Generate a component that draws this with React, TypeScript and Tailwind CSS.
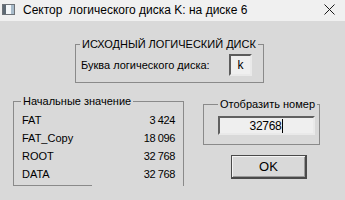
import React from "react";

function GroupLabel({ children, className }: { children: React.ReactNode; className: string }) {
  return (
    <span className={"absolute top-[-8px] bg-[#d9d9d9] px-[2px] text-[11px] leading-[14px] whitespace-nowrap " + className}>
      {children}
    </span>
  );
}

export default function App() {
  const rows: [string, string][] = [
    ["FAT", "3 424"],
    ["FAT_Copy", "18 096"],
    ["ROOT", "32 768"],
    ["DATA", "32 768"],
  ];
  return (
    <div className="w-[345px] h-[200px] bg-[#d9d9d9] flex flex-col overflow-hidden text-black font-['Liberation_Sans',Arial,sans-serif]">
      {/* Title bar */}
      <div className="h-[21px] bg-[#f0f0f0] flex items-center shrink-0">
        <svg width="13" height="11" viewBox="0 0 13 11" className="ml-[2px] mt-[-2px]">
          <rect x="0.5" y="0.5" width="12" height="10" fill="#e8eef2" stroke="#6e7378" />
          <rect x="1" y="1" width="3" height="9" fill="#5e6a74" />
          <rect x="4" y="1" width="5" height="9" fill="#f4f7f9" />
          <rect x="9" y="1" width="3" height="9" fill="#a9bccb" />
        </svg>
        <span className="ml-[8px] text-[12px] leading-[14px] mt-[-1px] whitespace-pre">Сектор  логического диска K: на диске 6</span>
        <svg width="11" height="11" viewBox="0 0 11 11" className="ml-auto mr-[10px] mt-[-2px]">
          <path d="M0.5 0.5 L10.5 10.5 M10.5 0.5 L0.5 10.5" stroke="#1a1a1a" strokeWidth="1" />
        </svg>
      </div>

      {/* Group 1 */}
      <div className="relative mt-[23px] ml-[75px] w-[189px] h-[39px] border border-[#8a8a8a] flex items-center pl-[5px] pr-[11px] pt-[2px]">
        <GroupLabel className="left-[4px]">ИСХОДНЫЙ ЛОГИЧЕСКИЙ ДИСК</GroupLabel>
        <span className="text-[11px] leading-[14px] whitespace-nowrap">Буква логического диска:</span>
        <div className="ml-auto w-[23px] h-[22px] border-2 border-t-[#5c5c5c] border-l-[#5c5c5c] border-b-[#e9e9e9] border-r-[#e9e9e9] bg-[#efefef] flex items-center justify-center text-[12px] leading-[14px]">
          k
        </div>
      </div>

      {/* Lower row */}
      <div className="flex mt-[18px]">
        {/* Group 2 */}
        <div className="relative ml-[13px] w-[171px] h-[85px] border-l border-t border-r border-[#8a8a8a] flex flex-col">
          <GroupLabel className="left-[7px]">Начальные значение</GroupLabel>
          <div className="flex flex-col pt-[9px] pl-[8px] pr-[8px]">
            {rows.map(([k, v]) => (
              <div key={k} className="h-[18px] flex items-center justify-between text-[11px] leading-[14px]">
                <span>{k}</span>
                <span className="tracking-[-0.4px]">{v}</span>
              </div>
            ))}
          </div>
          <div className="mt-auto ml-[-1px] h-px w-[79px] bg-[#8a8a8a]" />
        </div>

        {/* Right column */}
        <div className="flex flex-col ml-[19px] mt-[3px]">
          <div className="relative w-[117px] h-[41px] border border-[#8a8a8a] pt-[11px] pl-[14px]">
            <GroupLabel className="left-[14px]">Отобразить номер</GroupLabel>
            <div className="w-[97px] h-[19px] border-2 border-t-[#606060] border-l-[#606060] border-b-[#e9e9e9] border-r-[#e9e9e9] bg-[#efefef] flex items-center justify-center text-[12px] leading-[14px]">
              <span className="tracking-[-0.3px]">32768</span>
              <span className="w-px h-[14px] bg-black ml-[1px]" />
            </div>
          </div>
          <button className="mt-[10px] ml-[28px] w-[76px] h-[24px] border border-[#4a4a4a] border-b-2 border-r-2 bg-[#d9d9d9] shadow-[inset_1px_1px_0_#f4f4f4,inset_-1px_-1px_0_#9a9a9a] flex items-center justify-center text-[13px] leading-[14px]">
            OK
          </button>
        </div>
      </div>
    </div>
  );
}
